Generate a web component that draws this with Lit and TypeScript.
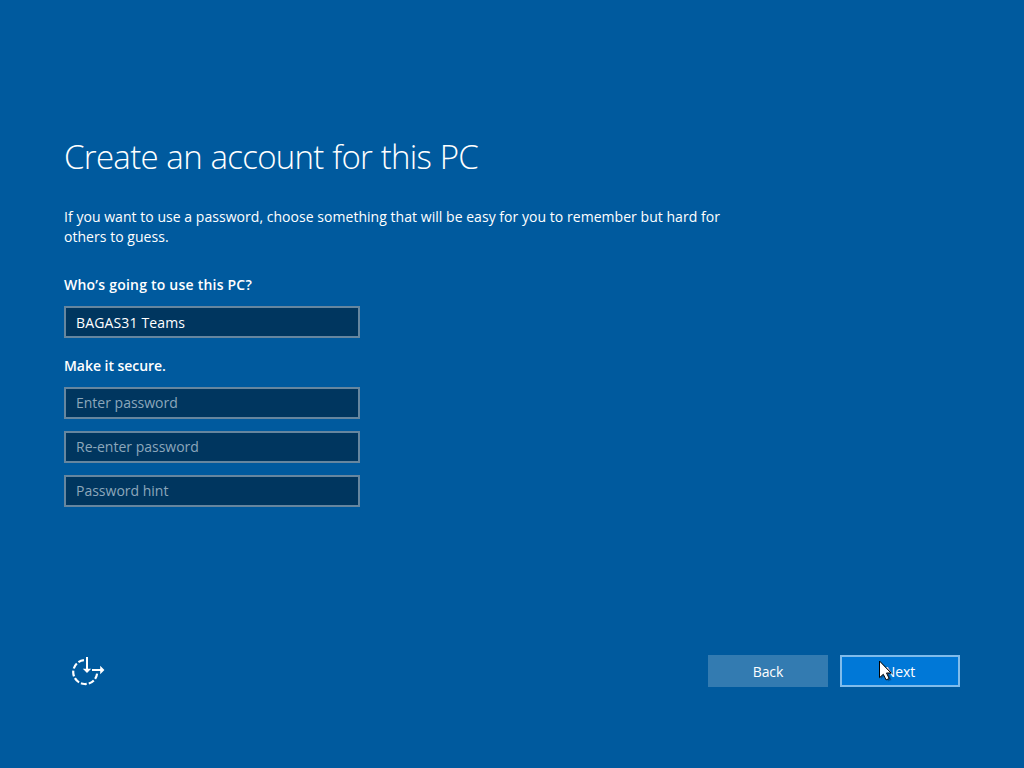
import { LitElement, html, css } from "lit";
import { customElement, property } from "lit/decorators.js";

@customElement("text-field")
class TextField extends LitElement {
  @property() value = "";
  @property() placeholder = "";
  @property() name = "";

  static styles = css`
    :host { display: block; }
    .field {
      display: block;
      box-sizing: border-box;
      width: 296px;
      height: 32px;
      margin: 0;
      padding: 1px 10px 0;
      border: 2px solid #66869f;
      border-radius: 0;
      outline: none;
      background: #00365f;
      color: #fff;
      font: 14px "Open Sans", "Noto Sans", sans-serif;
      letter-spacing: 0.15px;
    }
    .field:placeholder-shown { padding: 0 10px 1px; letter-spacing: 0; }
    .field::placeholder { color: #8ca7bb; opacity: 1; }
  `;

  render() {
    return html`<input class="field" aria-label=${this.name} .value=${this.value} placeholder=${this.placeholder || " "} />`;
  }
}

@customElement("app-root")
class AppRoot extends LitElement {
  static styles = css`
    :host {
      display: block;
      height: 768px;
      overflow: hidden;
      background: #005a9e;
      color: #fff;
      font: 14px/20px "Open Sans", "Noto Sans", sans-serif;
    }
    .page {
      display: flex;
      flex-direction: column;
      box-sizing: border-box;
      height: 100%;
      padding: 132px 64px 81px;
    }
    .title {
      margin: 0 0 25px;
      font-size: 33px;
      font-weight: 300;
      line-height: 50px;
      letter-spacing: -0.7px;
      word-spacing: 0.6px;
      white-space: nowrap;
    }
    .intro { margin: 0 0 28px; }
    .line { display: block; white-space: nowrap; letter-spacing: 0.04px; }
    .label { margin: 0 0 11px; font-size: 14px; font-weight: 600; line-height: 20px; letter-spacing: -0.04px; }
    .wide { letter-spacing: 0.22px; }
    .group { display: flex; flex-direction: column; gap: 12px; margin-bottom: 18px; }
    .footer { display: flex; align-items: center; justify-content: space-between; margin-top: auto; }
    .ease { display: block; width: 48px; height: 32px; }
    .actions { display: flex; gap: 12px; }
    .button {
      box-sizing: border-box;
      width: 120px;
      height: 32px;
      padding: 2px 0 0;
      border: 2px solid #337bb1;
      background: #337bb1;
      color: #fff;
      font: inherit;
      letter-spacing: -0.1px;
    }
    .primary { position: relative; border-color: #80bceb; background: #0078d7; }
    .cursor { position: absolute; left: 36px; top: 2px; }
  `;

  render() {
    return html`
      <main class="page">
        <h1 class="title">Create an account for this PC</h1>
        <p class="intro">
          <span class="line">If you want to use a password, choose something that will be easy for you to remember but hard for</span>
          <span class="line">others to guess.</span>
        </p>
        <h2 class="label wide">Who’s going to use this PC?</h2>
        <div class="group"><text-field name="User name" value="BAGAS31 Teams"></text-field></div>
        <h2 class="label">Make it secure.</h2>
        <div class="group">
          <text-field name="Password" placeholder="Enter password"></text-field>
          <text-field name="Confirm password" placeholder="Re-enter password"></text-field>
          <text-field name="Hint" placeholder="Password hint"></text-field>
        </div>
        <footer class="footer">
          <svg class="ease" viewBox="0 0 48 32" fill="none" stroke="#fff" stroke-width="2.2">
            <path d="M19.9 5.1A12 12 0 1 0 33.1 18.7" stroke-dasharray="5.9 2.05" />
            <path d="M23 2V15M28 15H38" stroke-width="2" />
            <path d="M18.8 13.8h8.4L23 18zM36.2 10.8v8.4L40.4 15z" fill="#fff" stroke="none" />
          </svg>
          <div class="actions">
            <button class="button">Back</button>
            <button class="button primary">Next
              <svg class="cursor" width="20" height="26" viewBox="0 0 20 26">
                <path d="M3 3V20L7 16.5L10 22.5L13.5 21L11 15H15.5Z" fill="#000" opacity=".25" />
                <path d="M1.5 2V18.7L5.3 15.3L8.1 20.9L11.2 19.5L8.5 14H13Z" fill="#fff" stroke="#000" />
              </svg>
            </button>
          </div>
        </footer>
      </main>
    `;
  }
}
